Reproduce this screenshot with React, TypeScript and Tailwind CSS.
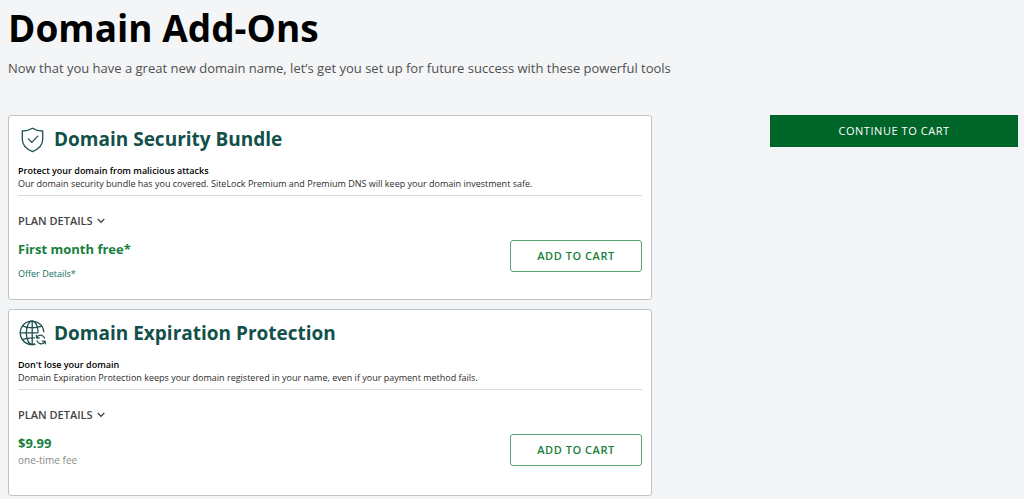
import type { ReactNode } from "react";

function ShieldIcon() {
  return (
    <svg width="28" height="28" viewBox="0 0 28 28" fill="none" stroke="#1f4f50" strokeWidth="1.3" strokeLinecap="round" strokeLinejoin="round" aria-hidden="true">
      <path d="M14.500 3.200c3 1.900 6.300 2.800 10.200 2.800v8.300c0 5.800-4 9.800-10.200 12.300C8.300 24.100 4.300 20.100 4.300 14.300V6C8.200 6 11.500 5.100 14.500 3.200Z" />
      <path d="M10.400 13.900l3.400 3.500 6-6.300" />
    </svg>
  );
}

function GlobeIcon() {
  return (
    <svg width="28" height="28" viewBox="0 0 28 28" fill="none" stroke="#1f4f50" strokeWidth="1.3" strokeLinecap="round" strokeLinejoin="round" aria-hidden="true">
      <path d="M25.800 12.600A11.800 11.800 0 1 0 17 25.300" />
      <path d="M20 12.800C19.800 6.600 17.400 2.200 14.200 2.200S8.300 7.200 8.300 13.800s2.700 11.700 5.900 11.700c.8 0 1.500-.2 2.200-.7" />
      <path d="M14.200 2.200v23.300M2.400 13.800H20M4.800 7.200c5.400 2.200 13.400 2.200 18.800 0M4.800 20.400c3.500-1.400 7.800-1.800 11.600-1.500" />
      <path d="M18.600 18.800c1-2 3-3 5-2.500 1.500.4 2.500 1.400 3 2.800M18.400 16.300l.2 2.700 2.700-.1" />
      <path d="M27 22.200c-1 2-3 3-5 2.500-1.500-.4-2.500-1.400-3-2.800M27.300 24.800l-.3-2.700-2.600.1" />
    </svg>
  );
}

function Chevron() {
  return (
    <svg width="8" height="8" viewBox="0 0 8 8" fill="none" stroke="#444" strokeWidth="1.3" aria-hidden="true">
      <path d="M.7 2 4 5.300 7.300 2" />
    </svg>
  );
}

type AddOnProps = {
  icon: ReactNode;
  title: string;
  tagline: string;
  description: string;
  price: string;
  children: ReactNode;
};

function AddOnCard({ icon, title, tagline, description, price, children }: AddOnProps) {
  return (
    <section className="rounded-[3px] border border-[#bfc4c8] bg-white px-[9px] pt-[7px] pb-[19px]">
      <div className="flex items-center gap-2">
        {icon}
        <h2 className="text-[19px] leading-8 font-bold text-[#12504a]">{title}</h2>
      </div>

      <div className="mt-[9px] border-b border-[#dcdcdc] pb-[5px] text-[9px] leading-[13px]">
        <p className="font-semibold text-black">{tagline}</p>
        <p className="text-[#2c2c2c]">{description}</p>
      </div>

      <button type="button" className="mt-4 flex items-center gap-1 text-[11px] leading-[18px] font-semibold text-[#444]">
        PLAN DETAILS
        <Chevron />
      </button>

      <div className="mt-[10px] flex items-start justify-between">
        <div>
          <p className="text-[13px] leading-[18px] font-bold text-[#17803d]">{price}</p>
          {children}
        </div>
        <button type="button" className="h-8 w-[132px] rounded-[3px] border border-[#55a377] text-[11px] font-semibold tracking-wider text-[#17803d]">
          ADD TO CART
        </button>
      </div>
    </section>
  );
}

export default function App() {
  return (
    <main className="min-h-screen bg-[#f4f5f7] pt-2 pr-[6px] pb-[3px] pl-2 font-['Open_Sans',sans-serif]">
      <h1 className="text-[37px] leading-10 font-bold text-black">Domain Add-Ons</h1>
      <p className="mt-[10px] text-[13px] leading-5 text-[#4f504f]">
        Now that you have a great new domain name, let’s get you set up for future success with these powerful tools
      </p>

      <div className="mt-[37px] grid grid-cols-[644fr_248fr] items-start gap-[118px]">
        <div className="flex flex-col gap-[9px]">
          <AddOnCard
            icon={<ShieldIcon />}
            title="Domain Security Bundle"
            tagline="Protect your domain from malicious attacks"
            description="Our domain security bundle has you covered. SiteLock Premium and Premium DNS will keep your domain investment safe."
            price="First month free*"
          >
            <a href="#offer-details" className="mt-[10px] block text-[9px] leading-3 font-medium text-[#16705a]">
              Offer Details*
            </a>
          </AddOnCard>
          <AddOnCard
            icon={<GlobeIcon />}
            title="Domain Expiration Protection"
            tagline="Don't lose your domain"
            description="Domain Expiration Protection keeps your domain registered in your name, even if your payment method fails."
            price="$9.99"
          >
            <p className="pb-2 text-[10px] leading-4 text-[#8b8b88]">one-time fee</p>
          </AddOnCard>
        </div>

        <button type="button" className="h-8 bg-[#006529] text-[11px] font-medium tracking-wider text-white">
          CONTINUE TO CART
        </button>
      </div>
    </main>
  );
}
